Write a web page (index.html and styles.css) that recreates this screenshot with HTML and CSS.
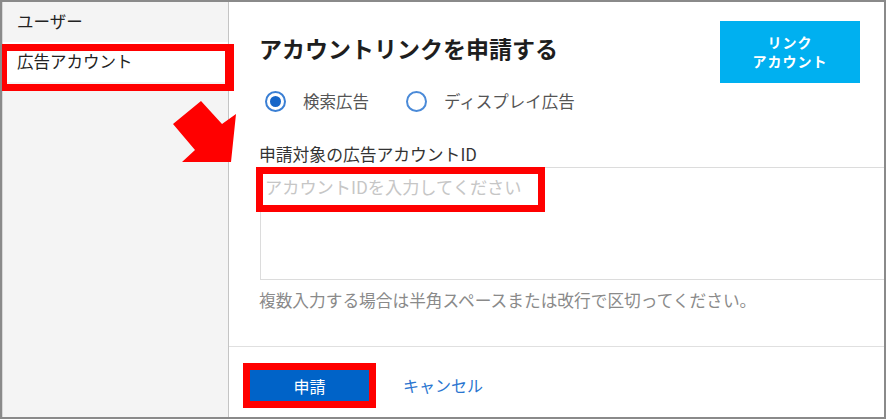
FILE: index.html
```html
<!DOCTYPE html>
<html lang="ja">
<head>
<meta charset="utf-8">
<title>アカウントリンクを申請する</title>
<link rel="stylesheet" href="styles.css">
</head>
<body>
<div class="frame">
  <nav class="sidebar">
    <div class="nav-item">ユーザー</div>
    <div class="nav-item active">広告アカウント</div>
  </nav>
  <main class="main">
    <div class="content">
      <div class="header">
        <h1 class="title">アカウントリンクを申請する</h1>
        <button class="link-btn" type="button">リンク<br>アカウント</button>
      </div>
      <div class="radios">
        <label class="radio-opt"><span class="radio checked"></span><span class="radio-text">検索広告</span></label>
        <label class="radio-opt"><span class="radio"></span><span class="radio-text">ディスプレイ広告</span></label>
      </div>
      <div class="field-label">申請対象の広告アカウントID</div>
      <textarea class="ids" placeholder="アカウントIDを入力してください"></textarea>
      <p class="hint">複数入力する場合は半角スペースまたは改行で区切ってください。</p>
    </div>
    <div class="footer">
      <div class="submit-wrap"><button class="primary" type="button">申請</button></div>
      <a class="cancel" href="#">キャンセル</a>
    </div>
  </main>
  <div class="mark mark-nav"></div>
  <div class="mark mark-input"></div>
  <svg class="arrow" width="70" height="68" viewBox="0 0 70 68">
    <polygon points="3,26 31,3 52,26 66,16 61,64 12,64 25,52" fill="#ff0000"/>
  </svg>
</div>
</body>
</html>
```

FILE: styles.css
```css
* { box-sizing: border-box; }
html, body { margin: 0; padding: 0; background: #fff; }
body {
  font-family: "Noto Sans CJK JP", "Noto Sans", sans-serif;
  color: #222;
}
.frame {
  position: relative;
  width: 886px;
  height: 419px;
  border: 2px solid #8a8a8a;
  display: flex;
  overflow: hidden;
}
.sidebar {
  width: 227px;
  flex: none;
  background: #f4f4f4;
  border-right: 1px solid #c4c4c4;
  border-left: 1px solid #d8d8d8;
}
.nav-item {
  height: 40px;
  line-height: 38px;
  padding-left: 14px;
  font-size: 16.5px;
  color: #222;
}
.nav-item.active {
  background: #fff;
}
.main {
  flex: 1;
  display: flex;
  flex-direction: column;
  overflow: hidden;
  min-width: 0;
}
.content {
  flex: 1;
  padding: 19px 24px 0 31px;
}
.header {
  display: flex;
  justify-content: space-between;
  align-items: flex-start;
  height: 62px;
}
.title {
  margin: 11px 0 0 -1px;
  font-size: 23px;
  line-height: 32px;
  font-weight: 700;
  color: #1e1e1e;
}
.link-btn {
  width: 140px;
  height: 62px;
  border: none;
  background: #00b0f0;
  color: #fff;
  font-family: inherit;
  font-size: 14px;
  font-weight: 700;
  letter-spacing: 1px;
  line-height: 19px;
  padding: 0;
}
.radios {
  margin-top: 6px;
  height: 24px;
  display: flex;
  align-items: center;
  padding-left: 5px;
  gap: 37px;
}
.radio-opt {
  display: flex;
  align-items: center;
  gap: 17px;
  font-size: 16.5px;
  line-height: 24px;
  color: #555;
}
.radio {
  width: 21px;
  height: 21px;
  border-radius: 50%;
  border: 2px solid #4a8ad8;
  display: flex;
  align-items: center;
  justify-content: center;
}
.radio.checked {
  border-color: #3a7fd4;
}
.radio.checked::after {
  content: "";
  width: 11px;
  height: 11px;
  border-radius: 50%;
  background: #1565c8;
}
.field-label {
  margin-top: 29px;
  font-size: 16.8px;
  line-height: 24px;
  color: #333;
  margin-left: -1px;
}
.ids {
  display: block;
  margin-top: 1px;
  width: calc(100% + 60px);
  height: 113px;
  border: 1px solid #dcdcdc;
  padding: 7px 4px;
  font-family: inherit;
  font-size: 17.2px;
  line-height: 24px;
  resize: none;
  outline: none;
}
.ids::placeholder { color: #c6c6c6; }
.hint {
  margin: 8px 0 0 -1px;
  font-size: 16.7px;
  line-height: 24px;
  color: #8a8a8a;
}
.footer {
  height: 71px;
  flex: none;
  border-top: 1px solid #e0e0e0;
  padding: 16px 0 0 14px;
  display: flex;
  align-items: flex-start;
  gap: 27px;
}
.submit-wrap {
  border: 7px solid #ff0000;
  background: #0063c8;
  width: 133px;
  height: 45px;
  display: flex;
}
.primary {
  flex: 1;
  margin: 0;
  border: none;
  border-radius: 0;
  appearance: none;
  background: #0063c8;
  color: #fff;
  font-family: inherit;
  font-size: 16px;
  padding: 0;
}
.cancel {
  margin-top: 7px;
  font-size: 16px;
  line-height: 31px;
  color: #2a75d0;
  text-decoration: none;
}
.mark {
  position: absolute;
  border: 7px solid #ff0000;
}
.mark-nav { left: -2px; top: 42px; width: 234px; height: 47px; border-right-width: 9px; }
.mark-input { left: 254px; top: 165px; width: 289px; height: 45px; }
.arrow {
  position: absolute;
  left: 168px;
  top: 96px;
}
```
